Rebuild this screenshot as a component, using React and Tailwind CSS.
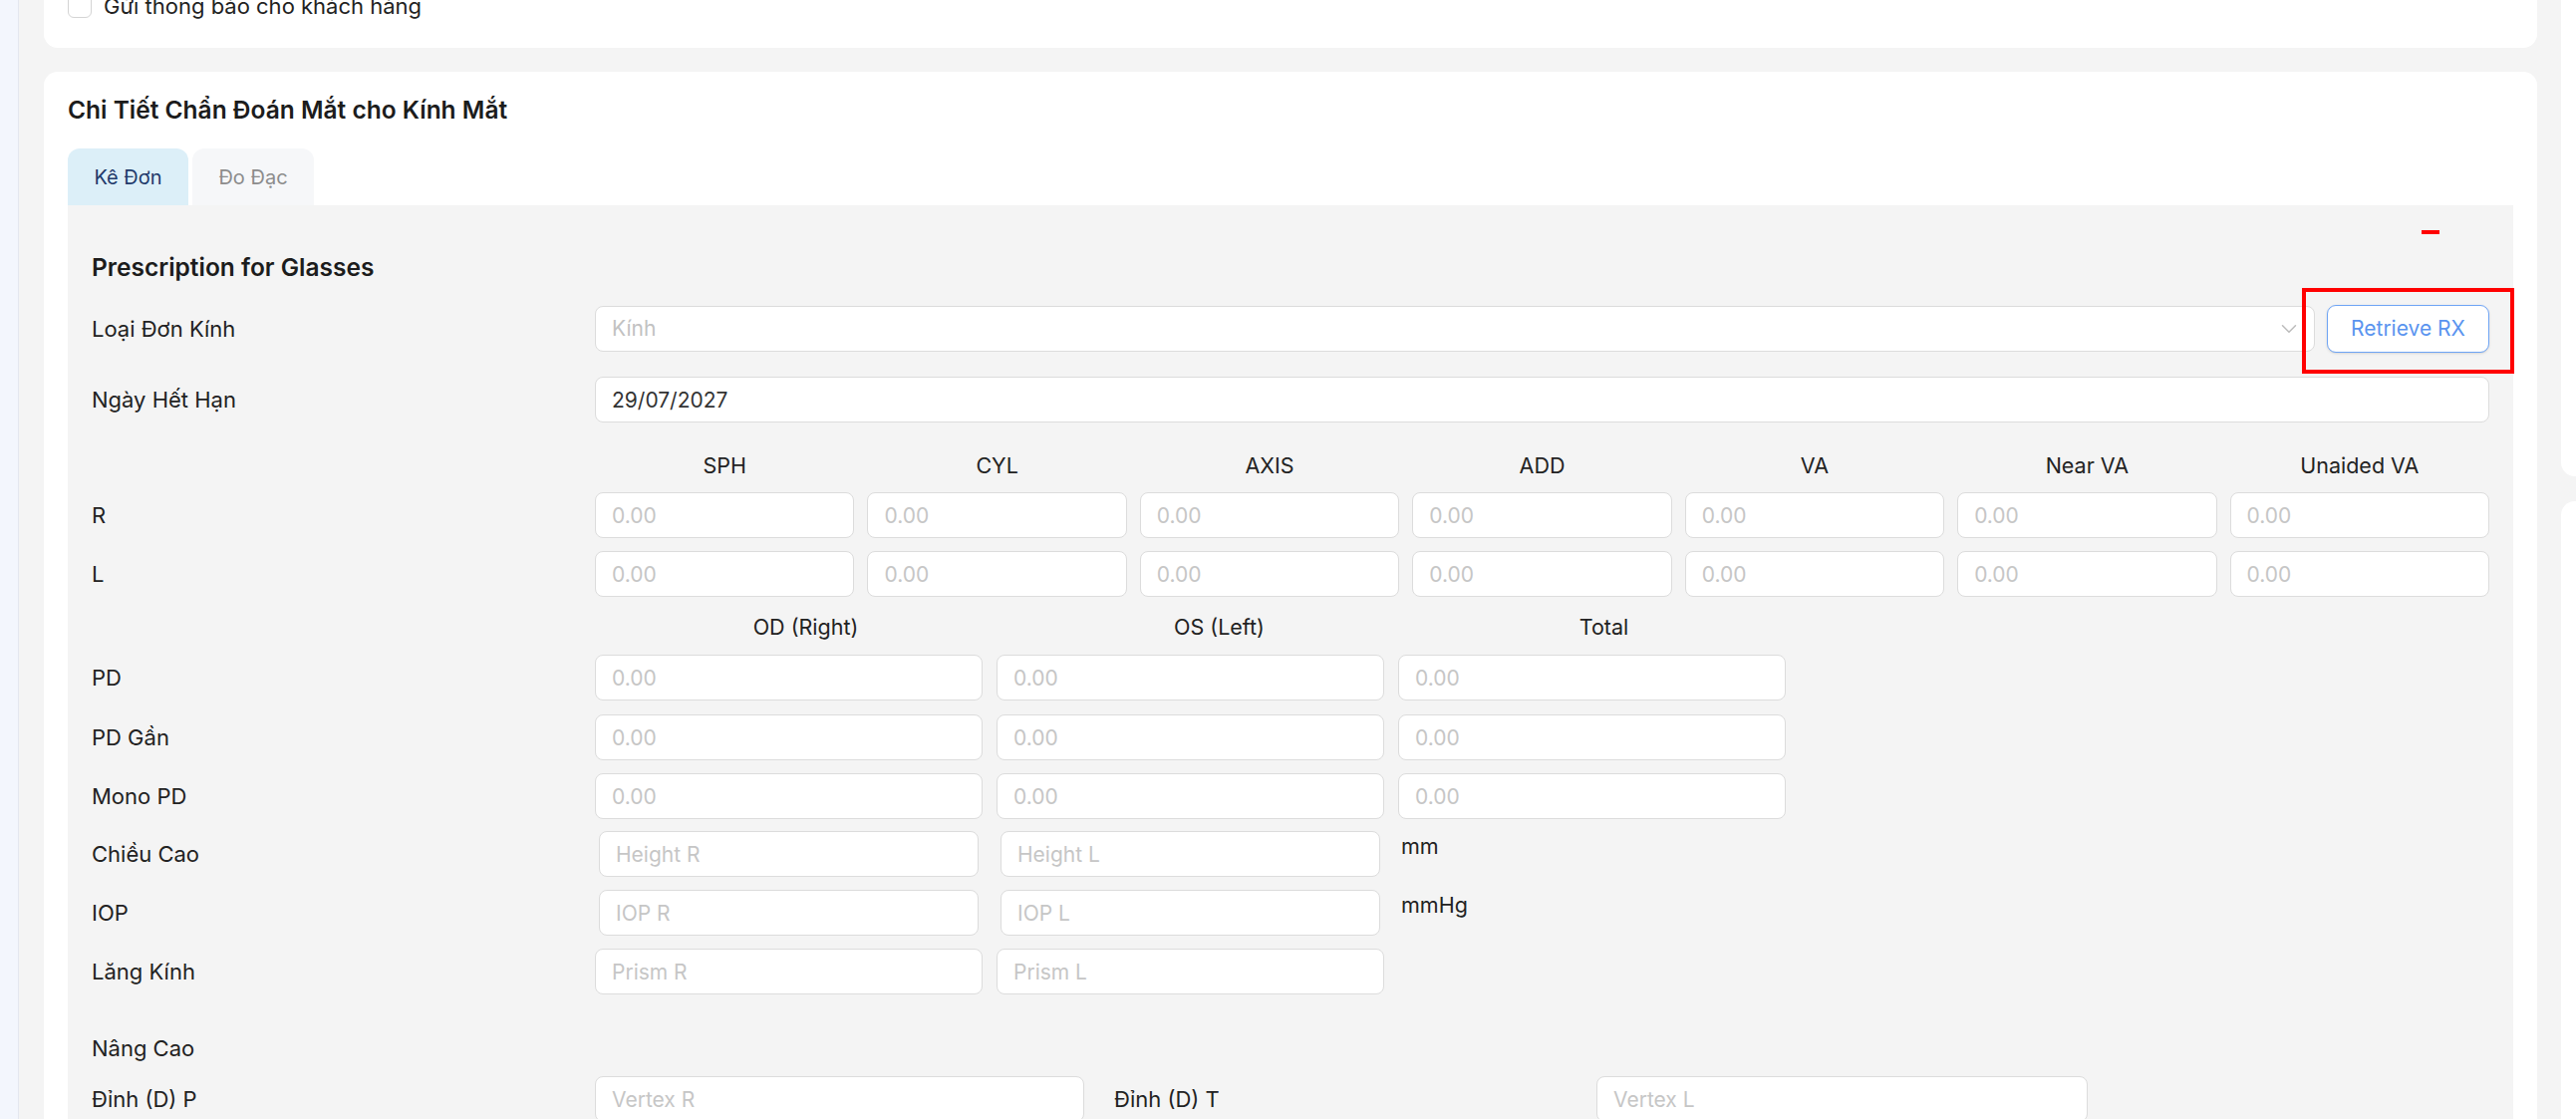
import { ChevronDown } from 'lucide-react';

const Field = ({ placeholder, value, className = '' }) => (
    <input
        readOnly
        placeholder={placeholder}
        defaultValue={value}
        className={`h-[46px] w-full rounded-[8px] border border-[#dcdcdc] bg-white px-[16px] text-[21px] text-[#333] placeholder:text-[#c6c6c6] outline-none ${className}`}
    />
);

const Row = ({ label, children, className = '' }) => (
    <div className={`grid shrink-0 grid-cols-[505px_1901px] items-center ${className}`}>
        <div className="text-[22px] text-[#222]">{label}</div>
        <div>{children}</div>
    </div>
);

const rxCols = ['SPH', 'CYL', 'AXIS', 'ADD', 'VA', 'Near VA', 'Unaided VA'];

const App = () => {
    return (
        <div className="flex h-[1123px] w-[2585px] overflow-hidden bg-[#f4f4f4] font-['Inter','Liberation_Sans',sans-serif] text-[#222]">
            {/* sidebar edge */}
            <div className="w-[19px] shrink-0 border-r border-[#e4e7ef] bg-[#f3f6fd]"></div>

            <div className="flex flex-1 gap-[24px] pl-[25px]">
                {/* main column */}
                <div className="flex w-[2502px] shrink-0 flex-col">
                    {/* notify card */}
                    <div className="-mt-[40px] h-[88px] shrink-0 rounded-[14px] bg-white pl-[24px] pt-[34px]">
                        <label className="flex items-center gap-[12px]">
                            <span className="h-[24px] w-[24px] rounded-[6px] border border-[#d4d4d4] bg-white"></span>
                            <span className="text-[22px] leading-[24px] text-[#222]">Gửi thông báo cho khách hàng</span>
                        </label>
                    </div>

                    {/* eye diagnosis card */}
                    <div className="mt-[24px] shrink-0 rounded-t-[14px] bg-white px-[24px] pt-[20px]">
                        <h2 className="text-[24.5px] font-semibold leading-[36px] text-[#1c1c1c]">Chi Tiết Chẩn Đoán Mắt cho Kính Mắt</h2>

                        {/* tabs */}
                        <div className="mt-[21px] flex gap-[4px]">
                            <div className="flex h-[57px] w-[121px] items-center justify-center rounded-t-[12px] bg-[#dcEFF8] text-[20px] text-[#1f3a6b]">Kê Đơn</div>
                            <div className="flex h-[57px] w-[122px] items-center justify-center rounded-t-[12px] bg-[#f6f7f9] text-[20px] text-[#8c8c8c]">Đo Đạc</div>
                        </div>

                        {/* tab panel */}
                        <div className="relative flex h-[1000px] flex-col bg-[#f4f4f4] px-[24px] pt-[46px]">
                            <div className="absolute right-[74px] top-[25px] h-[4px] w-[18px] bg-[#ff0000]"></div>

                            <h3 className="text-[24.5px] font-semibold leading-[32px] text-[#1c1c1c]">Prescription for Glasses</h3>

                            <Row label="Loại Đơn Kính" className="mt-[22px]">
                                <div className="flex items-center gap-[12px]">
                                    <div className="flex h-[46px] flex-1 items-center justify-between rounded-[8px] border border-[#dcdcdc] bg-white pl-[16px] pr-[12px]">
                                        <span className="text-[21px] text-[#c2c2c2]">Kính</span>
                                        <ChevronDown size={26} strokeWidth={1.4} className="text-[#bdbdbd]" />
                                    </div>
                                    <div className="relative">
                                        <div className="pointer-events-none absolute -bottom-[21px] -left-[25px] -right-[25px] -top-[17px] border-4 border-[#ff0000]"></div>
                                        <button className="flex h-[48px] w-[163px] items-center justify-center rounded-[9px] border border-[#6ea4f5] bg-white text-[21px] text-[#5a94ef] shadow-sm">
                                            Retrieve RX
                                        </button>
                                    </div>
                                </div>
                            </Row>

                            <Row label="Ngày Hết Hạn" className="mt-[24px]">
                                <Field value="29/07/2027" />
                            </Row>

                            <Row label="" className="mt-[28px]">
                                <div className="grid grid-cols-7 gap-[13px]">
                                    {rxCols.map((c) => (
                                        <div key={c} className="text-center text-[21.5px] leading-[30px] text-[#222]">{c}</div>
                                    ))}
                                </div>
                            </Row>

                            {['R', 'L'].map((side, i) => (
                                <Row key={side} label={side} className={i === 0 ? 'mt-[12px]' : 'mt-[13px]'}>
                                    <div className="grid grid-cols-7 gap-[13px]">
                                        {rxCols.map((c) => (
                                            <Field key={c} placeholder="0.00" />
                                        ))}
                                    </div>
                                </Row>
                            ))}

                            <Row label="" className="mt-[15px]">
                                <div className="grid grid-cols-[389px_389px_389px] gap-[14px] text-[21.5px] leading-[30px] text-[#222]">
                                    <div className="pl-[34px] text-center">OD (Right)</div>
                                    <div className="pl-[58px] text-center">OS (Left)</div>
                                    <div className="pl-[24px] text-center">Total</div>
                                </div>
                            </Row>

                            {['PD', 'PD Gần', 'Mono PD'].map((l, i) => (
                                <Row key={l} label={l} className={i === 1 ? 'mt-[14px]' : 'mt-[13px]'}>
                                    <div className="grid grid-cols-[389px_389px_389px] gap-[14px]">
                                        <Field placeholder="0.00" />
                                        <Field placeholder="0.00" />
                                        <Field placeholder="0.00" />
                                    </div>
                                </Row>
                            ))}

                            <Row label="Chiều Cao" className="mt-[12px]">
                                <div className="grid grid-cols-[389px_389px_389px] gap-[14px]">
                                    <div className="px-[4px]"><Field placeholder="Height R" /></div>
                                    <div className="px-[4px]"><Field placeholder="Height L" /></div>
                                    <div className="self-start pl-[3px] text-[21.5px] leading-[30px] text-[#222]">mm</div>
                                </div>
                            </Row>

                            <Row label="IOP" className="mt-[13px]">
                                <div className="grid grid-cols-[389px_389px_389px] gap-[14px]">
                                    <div className="px-[4px]"><Field placeholder="IOP R" /></div>
                                    <div className="px-[4px]"><Field placeholder="IOP L" /></div>
                                    <div className="self-start pl-[3px] text-[21.5px] leading-[30px] text-[#222]">mmHg</div>
                                </div>
                            </Row>

                            <Row label="Lăng Kính" className="mt-[13px]">
                                <div className="grid grid-cols-[389px_389px_389px] gap-[14px]">
                                    <Field placeholder="Prism R" />
                                    <Field placeholder="Prism L" />
                                </div>
                            </Row>

                            <div className="mt-[39px] shrink-0 text-[22px] leading-[30px] text-[#222]">Nâng Cao</div>

                            <div className="mt-[13px] grid shrink-0 grid-cols-[505px_491px_514px_493px] items-center">
                                <div className="text-[22px] text-[#222]">Đỉnh (D) P</div>
                                <Field placeholder="Vertex R" />
                                <div className="pl-[30px] text-[22px] text-[#222]">Đỉnh (D) T</div>
                                <Field placeholder="Vertex L" />
                            </div>
                        </div>
                    </div>
                </div>

                {/* right column */}
                <div className="flex w-[300px] shrink-0 flex-col gap-[25px]">
                    <div className="h-[478px] shrink-0 rounded-b-[14px] bg-white"></div>
                    <div className="h-[700px] shrink-0 rounded-t-[14px] bg-white"></div>
                </div>
            </div>
        </div>
    );
};

export default App;
